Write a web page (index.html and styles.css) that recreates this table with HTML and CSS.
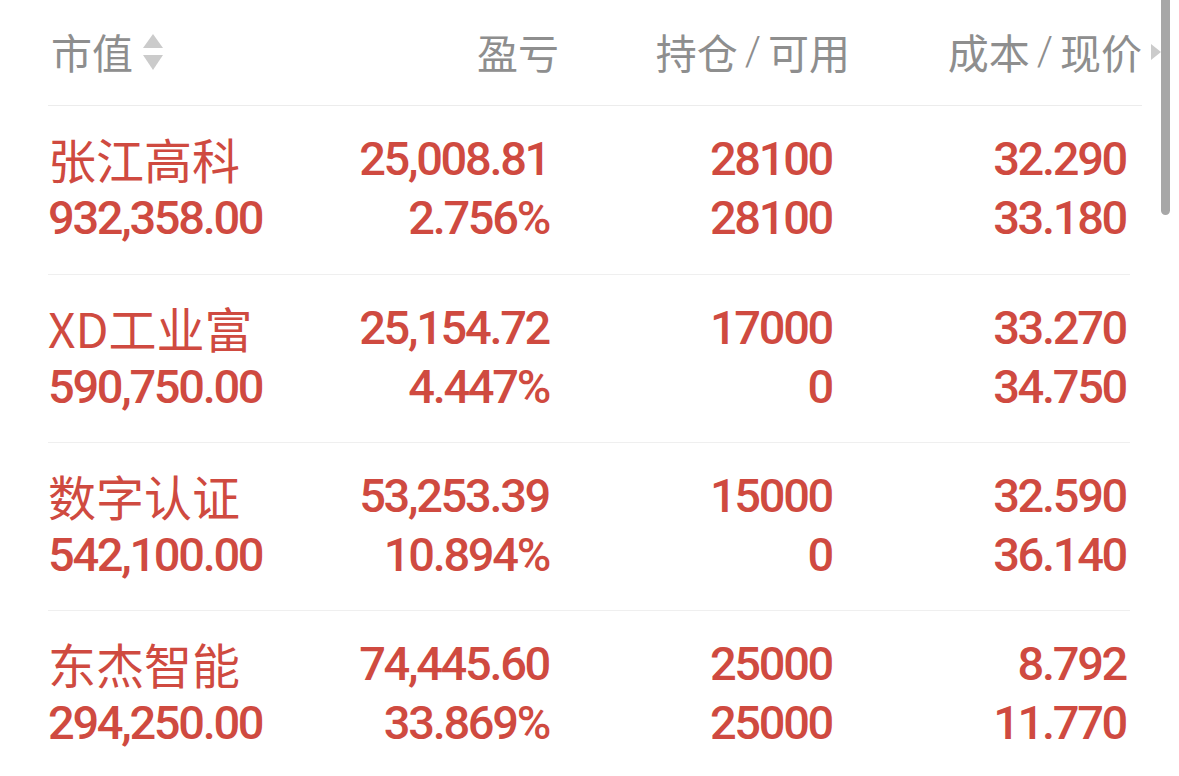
FILE: index.html
```html
<!DOCTYPE html>
<html lang="zh-CN">
<head>
<meta charset="utf-8">
<title>持仓</title>
<link rel="stylesheet" href="styles.css">
</head>
<body>
<div class="page">
  <div class="header">
    <div class="hcell h1">市值<svg class="sort" width="22" height="38" viewBox="0 0 22 38"><polygon points="11,0 21,14 1,14" fill="#cbcbcb"/><polygon points="1,21 21,21 11,36" fill="#cbcbcb"/></svg></div>
    <div class="hcell right">盈亏</div>
    <div class="hcell right">持仓<span class="slash">/</span>可用</div>
    <div class="hcell right last">成本<span class="slash">/</span>现价<svg class="more" width="12" height="18" viewBox="0 0 12 18"><polygon points="1,1 11,9 1,17" fill="#cbcbcb"/></svg></div>
  </div>

  <div class="row first">
    <div class="cell"><div class="name">张江高科</div><div class="num">932,358.00</div></div>
    <div class="cell right"><div class="num">25,008.81</div><div class="num">2.756%</div></div>
    <div class="cell right"><div class="num">28100</div><div class="num">28100</div></div>
    <div class="cell right"><div class="num">32.290</div><div class="num">33.180</div></div>
  </div>
  <div class="row">
    <div class="cell"><div class="name">XD工业富</div><div class="num">590,750.00</div></div>
    <div class="cell right"><div class="num">25,154.72</div><div class="num">4.447%</div></div>
    <div class="cell right"><div class="num">17000</div><div class="num">0</div></div>
    <div class="cell right"><div class="num">33.270</div><div class="num">34.750</div></div>
  </div>
  <div class="row">
    <div class="cell"><div class="name">数字认证</div><div class="num">542,100.00</div></div>
    <div class="cell right"><div class="num">53,253.39</div><div class="num">10.894%</div></div>
    <div class="cell right"><div class="num">15000</div><div class="num">0</div></div>
    <div class="cell right"><div class="num">32.590</div><div class="num">36.140</div></div>
  </div>
  <div class="row">
    <div class="cell"><div class="name">东杰智能</div><div class="num">294,250.00</div></div>
    <div class="cell right"><div class="num">74,445.60</div><div class="num">33.869%</div></div>
    <div class="cell right"><div class="num">25000</div><div class="num">25000</div></div>
    <div class="cell right"><div class="num">8.792</div><div class="num">11.770</div></div>
  </div>
</div>
<div class="scrollbar"></div>
</body>
</html>
```

FILE: styles.css
```css
html, body {
  margin: 0;
  padding: 0;
  background: #ffffff;
  overflow: hidden;
}
body {
  width: 1179px;
  height: 776px;
  position: relative;
  font-family: "Noto Sans CJK SC", sans-serif;
}
.page {
  padding-left: 48px;
}
.header {
  width: 1094px;
  display: grid;
  grid-template-columns: 252px 259px 291px 292px;
  border-bottom: 1px solid #ececec;
  padding-top: 22px;
  padding-bottom: 24px;
  height: 59px;
  color: #8e8e8e;
  font-size: 41px;
  line-height: 59px;
}
.hcell {
  display: flex;
  align-items: center;
  white-space: nowrap;
}
.h1 {
  padding-left: 3px;
}
.hcell.right {
  justify-content: flex-end;
}
.slash {
  font-family: "Roboto", sans-serif;
  font-weight: 300;
  margin: 0 7px;
}
.sort {
  margin-left: 9px;
  margin-top: 2px;
}
.hcell.last {
  position: relative;
}
.more {
  position: absolute;
  right: -20px;
  top: 21px;
}
.row {
  width: 1078px;
  padding-right: 4px;
  display: grid;
  grid-template-columns: 252px 249px 283px 294px;
  padding-top: 23px;
  padding-bottom: 26px;
  border-bottom: 1px solid #efefef;
  color: #cf4a40;
}
.row.first {
  padding-bottom: 27px;
}
.row:last-child {
  border-bottom: none;
}
.cell {
  display: flex;
  flex-direction: column;
  white-space: nowrap;
}
.cell.right {
  align-items: flex-end;
}
.name {
  font-size: 48px;
  line-height: 59px;
  height: 59px;
}
.num {
  font-family: "Roboto", sans-serif;
  font-weight: 500;
  font-size: 47px;
  letter-spacing: -2.3px;
  line-height: 59px;
  height: 59px;
}
.scrollbar {
  position: absolute;
  left: 1161px;
  top: -6px;
  width: 9px;
  height: 221px;
  border-radius: 5px;
  background: #a7a7a7;
}
```
